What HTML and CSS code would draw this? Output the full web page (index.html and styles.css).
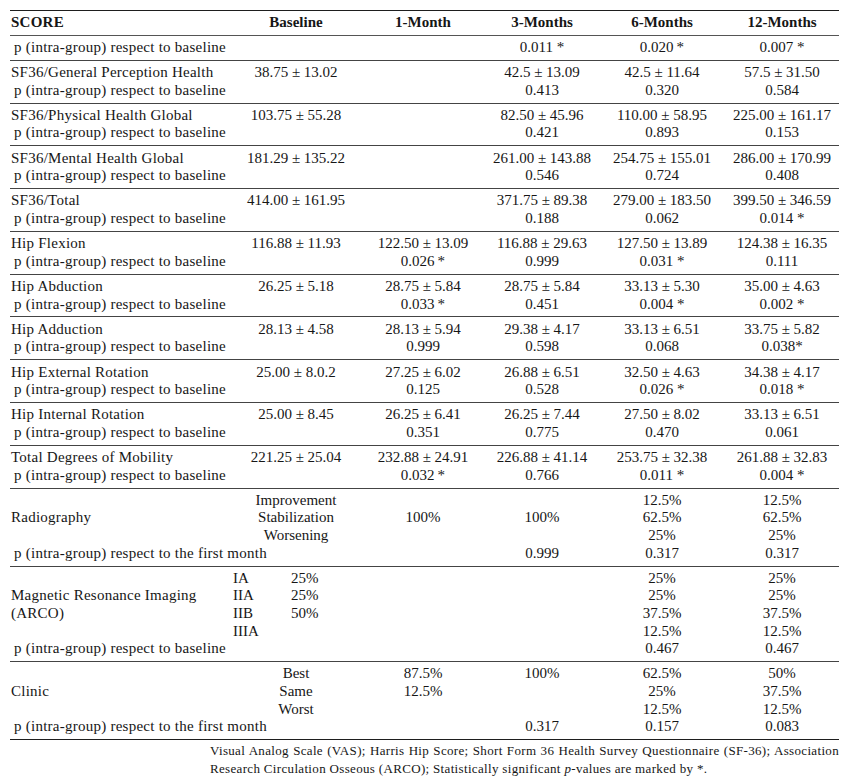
FILE: index.html
```html
<!DOCTYPE html>
<html lang="en">
<head>
<meta charset="utf-8">
<title>Outcome scores</title>
<link rel="stylesheet" href="styles.css">
</head>
<body>
<div class="page">
<table class="scores">
  <colgroup>
    <col class="c-label"><col class="c-base"><col class="c-m1"><col class="c-m3"><col class="c-m6"><col class="c-m12">
  </colgroup>
  <thead>
    <tr><th class="lbl">SCORE</th><th>Baseline</th><th>1-Month</th><th>3-Months</th><th>6-Months</th><th>12-Months</th></tr>
  </thead>
  <tbody>
    <tr><td class="lbl p">p (intra-group) respect to baseline</td><td></td><td></td><td>0.011 *</td><td>0.020&thinsp;*</td><td>0.007 *</td></tr>
  </tbody>
  <tbody>
    <tr><td class="lbl">SF36/General Perception Health</td><td>38.75 ± 13.02</td><td></td><td>42.5 ± 13.09</td><td>42.5 ± 11.64</td><td>57.5 ± 31.50</td></tr>
    <tr><td class="lbl p">p (intra-group) respect to baseline</td><td></td><td></td><td>0.413</td><td>0.320</td><td>0.584</td></tr>
  </tbody>
  <tbody>
    <tr><td class="lbl">SF36/Physical Health Global</td><td>103.75 ± 55.28</td><td></td><td>82.50 ± 45.96</td><td>110.00 ± 58.95</td><td>225.00 ± 161.17</td></tr>
    <tr><td class="lbl p">p (intra-group) respect to baseline</td><td></td><td></td><td>0.421</td><td>0.893</td><td>0.153</td></tr>
  </tbody>
  <tbody>
    <tr><td class="lbl">SF36/Mental Health Global</td><td>181.29 ± 135.22</td><td></td><td>261.00 ± 143.88</td><td>254.75 ± 155.01</td><td>286.00 ± 170.99</td></tr>
    <tr><td class="lbl p">p (intra-group) respect to baseline</td><td></td><td></td><td>0.546</td><td>0.724</td><td>0.408</td></tr>
  </tbody>
  <tbody>
    <tr><td class="lbl">SF36/Total</td><td>414.00 ± 161.95</td><td></td><td>371.75 ± 89.38</td><td>279.00 ± 183.50</td><td>399.50 ± 346.59</td></tr>
    <tr><td class="lbl p">p (intra-group) respect to baseline</td><td></td><td></td><td>0.188</td><td>0.062</td><td>0.014 *</td></tr>
  </tbody>
  <tbody>
    <tr><td class="lbl">Hip Flexion</td><td>116.88 ± 11.93</td><td>122.50 ± 13.09</td><td>116.88 ± 29.63</td><td>127.50 ± 13.89</td><td>124.38 ± 16.35</td></tr>
    <tr><td class="lbl p">p (intra-group) respect to baseline</td><td></td><td>0.026&thinsp;*</td><td>0.999</td><td>0.031 *</td><td>0.111</td></tr>
  </tbody>
  <tbody>
    <tr><td class="lbl">Hip Abduction</td><td>26.25 ± 5.18</td><td>28.75 ± 5.84</td><td>28.75 ± 5.84</td><td>33.13 ± 5.30</td><td>35.00 ± 4.63</td></tr>
    <tr><td class="lbl p">p (intra-group) respect to baseline</td><td></td><td>0.033&thinsp;*</td><td>0.451</td><td>0.004 *</td><td>0.002 *</td></tr>
  </tbody>
  <tbody>
    <tr><td class="lbl">Hip Adduction</td><td>28.13 ± 4.58</td><td>28.13 ± 5.94</td><td>29.38 ± 4.17</td><td>33.13 ± 6.51</td><td>33.75 ± 5.82</td></tr>
    <tr><td class="lbl p">p (intra-group) respect to baseline</td><td></td><td>0.999</td><td>0.598</td><td>0.068</td><td>0.038*</td></tr>
  </tbody>
  <tbody>
    <tr><td class="lbl">Hip External Rotation</td><td>25.00 ± 8.0.2</td><td>27.25 ± 6.02</td><td>26.88 ± 6.51</td><td>32.50 ± 4.63</td><td>34.38 ± 4.17</td></tr>
    <tr><td class="lbl p">p (intra-group) respect to baseline</td><td></td><td>0.125</td><td>0.528</td><td>0.026 *</td><td>0.018 *</td></tr>
  </tbody>
  <tbody>
    <tr><td class="lbl">Hip Internal Rotation</td><td>25.00 ± 8.45</td><td>26.25 ± 6.41</td><td>26.25 ± 7.44</td><td>27.50 ± 8.02</td><td>33.13 ± 6.51</td></tr>
    <tr><td class="lbl p">p (intra-group) respect to baseline</td><td></td><td>0.351</td><td>0.775</td><td>0.470</td><td>0.061</td></tr>
  </tbody>
  <tbody>
    <tr><td class="lbl">Total Degrees of Mobility</td><td>221.25 ± 25.04</td><td>232.88 ± 24.91</td><td>226.88 ± 41.14</td><td>253.75 ± 32.38</td><td>261.88 ± 32.83</td></tr>
    <tr><td class="lbl p">p (intra-group) respect to baseline</td><td></td><td>0.032&thinsp;*</td><td>0.766</td><td>0.011 *</td><td>0.004 *</td></tr>
  </tbody>
  <tbody>
    <tr><td class="lbl"></td><td>Improvement</td><td></td><td></td><td>12.5%</td><td>12.5%</td></tr>
    <tr><td class="lbl">Radiography</td><td>Stabilization</td><td>100%</td><td>100%</td><td>62.5%</td><td>62.5%</td></tr>
    <tr><td class="lbl"></td><td>Worsening</td><td></td><td></td><td>25%</td><td>25%</td></tr>
    <tr><td class="lbl p">p (intra-group) respect to the first month</td><td></td><td></td><td>0.999</td><td>0.317</td><td>0.317</td></tr>
  </tbody>
  <tbody>
    <tr><td class="lbl"></td><td class="grade"><span class="g">IA</span><span>25%</span></td><td></td><td></td><td>25%</td><td>25%</td></tr>
    <tr><td class="lbl">Magnetic Resonance Imaging</td><td class="grade"><span class="g">IIA</span><span>25%</span></td><td></td><td></td><td>25%</td><td>25%</td></tr>
    <tr><td class="lbl">(ARCO)</td><td class="grade"><span class="g">IIB</span><span>50%</span></td><td></td><td></td><td>37.5%</td><td>37.5%</td></tr>
    <tr><td class="lbl"></td><td class="grade"><span class="g">IIIA</span></td><td></td><td></td><td>12.5%</td><td>12.5%</td></tr>
    <tr><td class="lbl p">p (intra-group) respect to baseline</td><td></td><td></td><td></td><td>0.467</td><td>0.467</td></tr>
  </tbody>
  <tbody class="last">
    <tr><td class="lbl"></td><td>Best</td><td>87.5%</td><td>100%</td><td>62.5%</td><td>50%</td></tr>
    <tr><td class="lbl">Clinic</td><td>Same</td><td>12.5%</td><td></td><td>25%</td><td>37.5%</td></tr>
    <tr><td class="lbl"></td><td>Worst</td><td></td><td></td><td>12.5%</td><td>12.5%</td></tr>
    <tr><td class="lbl p">p (intra-group) respect to the first month</td><td></td><td></td><td>0.317</td><td>0.157</td><td>0.083</td></tr>
  </tbody>
</table>
<p class="note"><span class="note-first">Visual Analog Scale (VAS); Harris Hip Score; Short Form 36 Health Survey Questionnaire (SF-36); Association</span> Research Circulation Osseous (ARCO); Statistically significant <i>p</i>-values are marked by *.</p>
</div>
</body>
</html>
```
FILE: styles.css
```css
html, body {
  margin: 0;
  padding: 0;
  background: #ffffff;
}

.page {
  padding: 10px 5px 0 10px;
  font-family: "Liberation Serif", "Times New Roman", serif;
  color: #161616;
}

.scores {
  width: 829px;
  border-collapse: collapse;
  table-layout: fixed;
  font-size: 15px;
  line-height: 17.6px;
  border-top: 1px solid #1e1e1e;
}

.c-label { width: 221px; }
.c-base { width: 130px; }
.c-m1 { width: 124px; }
.c-m3 { width: 114px; }
.c-m6 { width: 126px; }
.c-m12 { width: 114px; }

.scores th,
.scores td {
  padding: 0;
  text-align: center;
  white-space: nowrap;
  overflow: visible;
  font-weight: normal;
}

.scores th {
  font-weight: bold;
  padding: 3px 0 3px 0;
}

.scores thead tr {
  border-bottom: 1px solid #555;
}

.scores tbody {
  border-bottom: 1px solid #444;
}

.scores tbody.last {
  border-bottom: 1px solid #1e1e1e;
}

.scores tbody tr:first-child td {
  padding-top: 3.3px;
}

.scores tbody tr:last-child td {
  padding-bottom: 3.3px;
}

.scores .lbl {
  text-align: left;
  padding-left: 1px;
  letter-spacing: 0.25px;
}

.scores .lbl.p {
  padding-left: 4px;
}

.scores td.grade {
  text-align: left;
  padding-left: 2px;
}

.grade .g {
  display: inline-block;
  width: 58px;
}

.note {
  margin: 2px 0 0 200px;
  width: 629px;
  font-size: 13px;
  line-height: 17.8px;
  letter-spacing: 0.33px;
  text-align: justify;
}

.note-first {
  display: block;
  text-align: justify;
  text-align-last: justify;
}
```
